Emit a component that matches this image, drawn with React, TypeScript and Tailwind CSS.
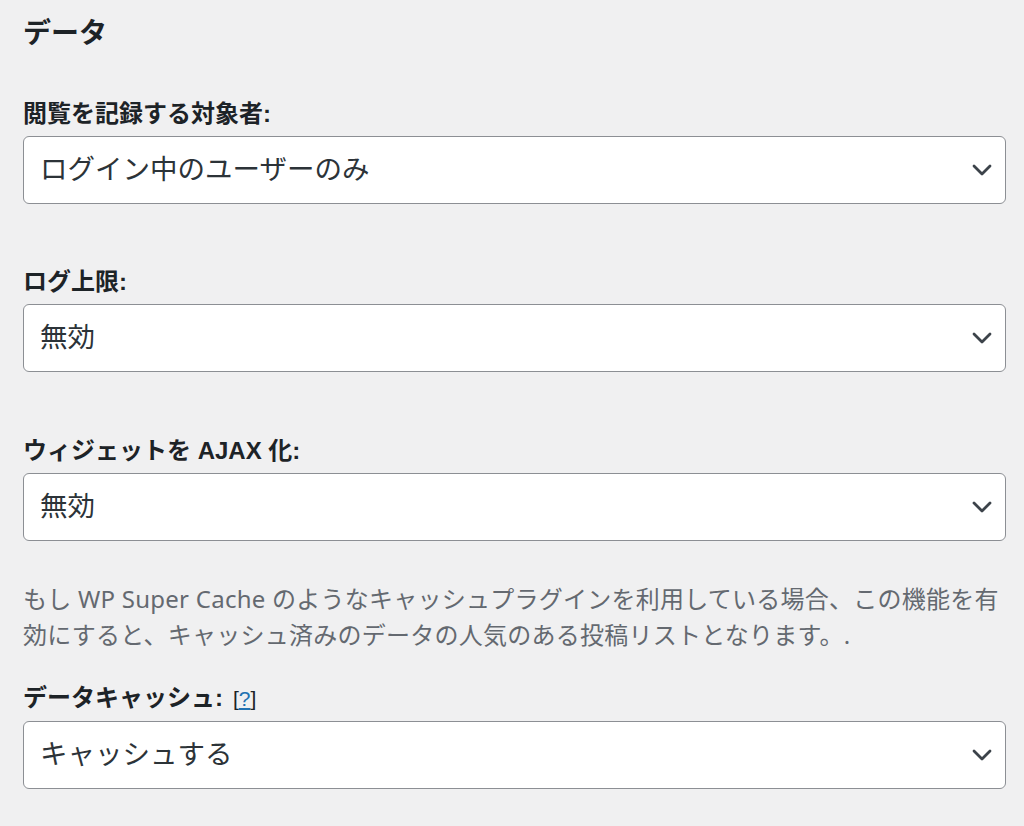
import type { ReactNode } from "react";

// #################################
// ### Settings: データ
// #################################

const FONT = {
  fontFamily: '"Liberation Sans", "Noto Sans CJK JP", sans-serif',
};

const DESC_FONT = {
  fontFamily: '"Noto Sans", "Noto Sans CJK JP", sans-serif',
};

function Chevron() {
  return (
    <svg width="20" height="12" viewBox="0 0 20 12" fill="none" aria-hidden>
      <path
        d="M2 2 L10 10 L18 2"
        stroke="#3c434a"
        strokeWidth="2.8"
        strokeLinecap="round"
        strokeLinejoin="round"
      />
    </svg>
  );
}

function Field({
  label,
  value,
  extra,
  className,
}: Readonly<{
  label: string;
  value: string;
  extra?: ReactNode;
  className?: string;
}>) {
  return (
    <div className={className}>
      <label className="block text-[24px] leading-[32px] font-bold text-[#1d2327]">
        {label}
        {extra}
      </label>
      <div className="mt-[6px] h-[68px] flex items-center justify-between rounded-[6px] border border-[#8c8f94] bg-white pl-[16px] pr-[13px]">
        <span className="text-[27.5px] text-[#2c3338]">{value}</span>
        <Chevron />
      </div>
    </div>
  );
}

export default function App() {
  return (
    <div
      className="min-h-screen bg-[#f0f0f1] pl-[23px] pr-[18px] pt-[14px]"
      style={FONT}
    >
      <h2 className="text-[28px] leading-[40px] font-bold text-[#1d2327]">
        データ
      </h2>

      <Field
        className="mt-[44px]"
        label="閲覧を記録する対象者:"
        value="ログイン中のユーザーのみ"
      />
      <Field className="mt-[62px]" label="ログ上限:" value="無効" />
      <Field
        className="mt-[63px]"
        label="ウィジェットを AJAX 化:"
        value="無効"
      />

      <p
        className="mt-[40px] text-[24px] leading-[36px] tracking-[0.25px] text-[#646970]"
        style={DESC_FONT}
      >
        もし WP Super Cache のようなキャッシュプラグインを利用している場合、この機能を有
        <br />
        効にすると、キャッシュ済みのデータの人気のある投稿リストとなります。.
      </p>

      <Field
        className="mt-[29px]"
        label="データキャッシュ:"
        value="キャッシュする"
        extra={
          <span className="ml-[10px] text-[21px] font-medium">
            [
            <a href="#" className="text-[#2271b1] underline">
              ?
            </a>
            ]
          </span>
        }
      />
    </div>
  );
}
